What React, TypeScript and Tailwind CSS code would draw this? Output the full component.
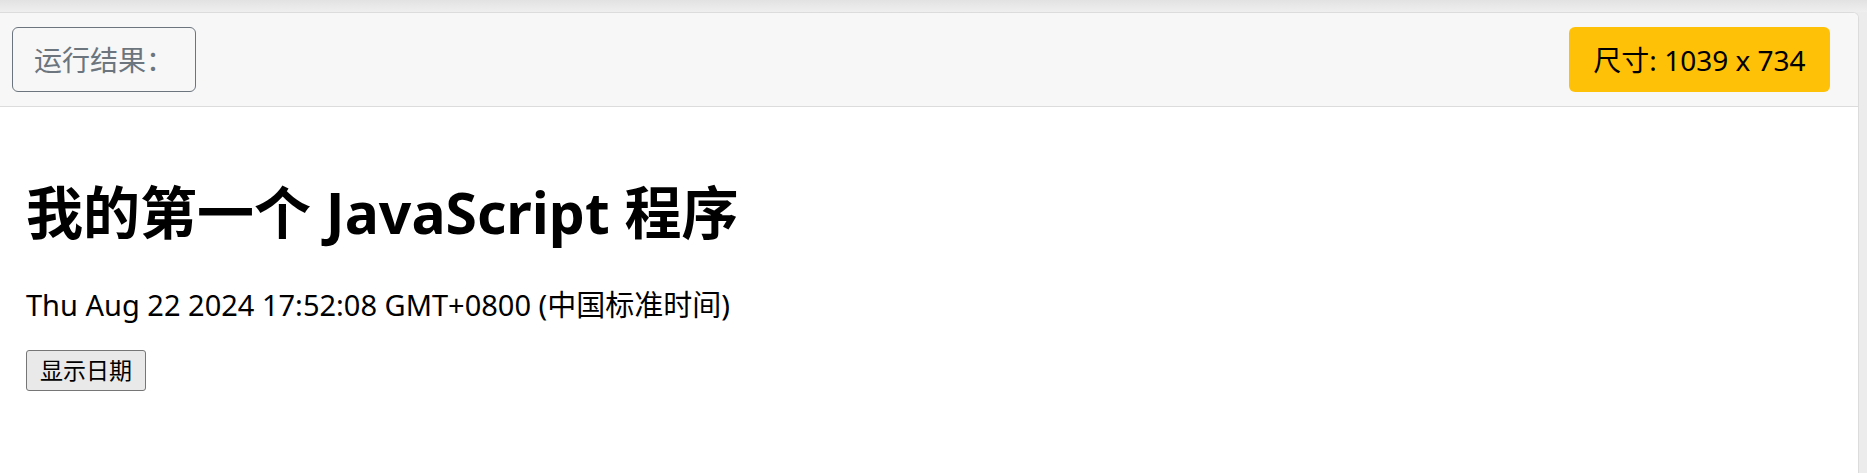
import React from "react";

const cjk = { fontFamily: '"Noto Sans", "Noto Sans CJK SC", sans-serif' };

export default function App() {
  return (
    <div className="w-[1867px] h-[473px] flex flex-col bg-[#ececec] overflow-hidden" style={cjk}>
      <div className="h-[12px] shrink-0 bg-gradient-to-b from-[#e2e2e2] to-[#efefef]" />
      <div className="flex flex-1 min-h-0">
        <div className="w-[1859px] flex flex-col bg-white border-t border-r border-[#dcdcdc] rounded-tr-[6px] overflow-hidden">
          <div className="h-[94px] shrink-0 flex items-center justify-between bg-[#f7f7f7] border-b border-[#dcdcdc] pl-[12px] pr-[28px]">
            <div className="w-[184px] h-[65px] flex items-center pl-[21px] border border-[#6c757d] rounded-[6px] text-[#6c757d] text-[28px]">
              运行结果：
            </div>
            <div className="w-[261px] h-[65px] flex items-center justify-center bg-[#ffc107] rounded-[6px] text-black text-[28px]">
              尺寸: 1039 x 734
            </div>
          </div>
          <div className="flex flex-col items-start pl-[26px]">
            <h1 className="mt-[70px] text-[57px] leading-[70px] font-bold text-black">
              我的第一个 JavaScript 程序
            </h1>
            <p className="mt-[40px] text-[29px] leading-[36px] text-black">
              Thu Aug 22 2024 17:52:08 GMT+0800 (中国标准时间)
            </p>
            <button className="mt-[27px] w-[120px] h-[41px] flex items-center justify-center bg-[#e9e9e9] border border-[#767676] rounded-[3px] text-[23px] text-black">
              显示日期
            </button>
          </div>
        </div>
        <div className="flex-1 bg-[#ececec]" />
      </div>
    </div>
  );
}
